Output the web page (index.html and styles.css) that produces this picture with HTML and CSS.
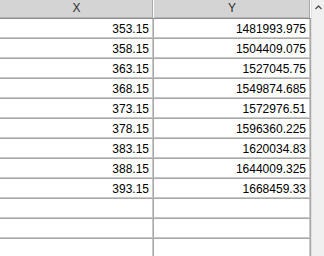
FILE: index.html
```html
<!DOCTYPE html>
<html>
<head>
<meta charset="utf-8">
<link rel="stylesheet" href="styles.css">
</head>
<body>
<div class="view">
  <div class="grid">
    <div class="row head">
      <div class="cell hcell">X</div>
      <div class="cell hcell">Y</div>
    </div>
    <div class="row"><div class="cell">353.15</div><div class="cell">1481993.975</div></div>
    <div class="row"><div class="cell">358.15</div><div class="cell">1504409.075</div></div>
    <div class="row"><div class="cell">363.15</div><div class="cell">1527045.75</div></div>
    <div class="row"><div class="cell">368.15</div><div class="cell">1549874.685</div></div>
    <div class="row"><div class="cell">373.15</div><div class="cell">1572976.51</div></div>
    <div class="row"><div class="cell">378.15</div><div class="cell">1596360.225</div></div>
    <div class="row"><div class="cell">383.15</div><div class="cell">1620034.83</div></div>
    <div class="row"><div class="cell">388.15</div><div class="cell">1644009.325</div></div>
    <div class="row"><div class="cell">393.15</div><div class="cell">1668459.33</div></div>
    <div class="row"><div class="cell"></div><div class="cell"></div></div>
    <div class="row"><div class="cell"></div><div class="cell"></div></div>
    <div class="row"><div class="cell"></div><div class="cell"></div></div>
  </div>
  <div class="scrollbar">
    <div class="arrow">
      <svg width="7" height="5" viewBox="0 0 7 5"><path d="M0.5 4 L3.5 1 L6.5 4" fill="none" stroke="#505050" stroke-width="1.3"/></svg>
    </div>
  </div>
</div>
</body>
</html>
```
FILE: styles.css
```css
html, body {
  margin: 0;
  padding: 0;
  background: #ffffff;
}
body {
  font-family: "Liberation Sans", Arial, sans-serif;
  font-size: 12px;
  color: #000;
}
.view {
  display: flex;
  width: 324px;
  height: 256px;
  overflow: hidden;
}
.grid {
  width: 311px;
  flex: none;
}
.row {
  display: grid;
  grid-template-columns: 154px 157px;
  height: 20px;
  box-sizing: border-box;
  border-bottom: 1px solid #a8a8a8;
  box-shadow: inset 0 -1px 0 #c8c8c8;
}
.cell {
  box-sizing: border-box;
  border-right: 1px solid #a8a8a8;
  box-shadow: inset -1px 0 0 #c8c8c8;
  text-align: right;
  padding: 3px 4px 0 0;
  line-height: 14px;
  white-space: nowrap;
}
.head {
  height: 19px;
  background: #d4d4d4;
  border-bottom: 1px solid #8c8c8c;
  box-shadow: inset 0 -1px 0 #b4b4b4;
}
.hcell {
  text-align: center;
  padding: 1px 0 0 0;
  color: #303030;
  border-right: 1px solid #ffffff;
  box-shadow: inset -1px 0 0 #a8a8a8;
}
.scrollbar {
  width: 13px;
  flex: none;
  background: #f0f0f0;
  box-sizing: border-box;
  border-left: 1px solid #e0e0e0;
}
.arrow {
  display: flex;
  justify-content: center;
  padding-top: 5px;
  height: 17px;
  box-sizing: border-box;
}
.arrow svg {
  display: block;
}
```
